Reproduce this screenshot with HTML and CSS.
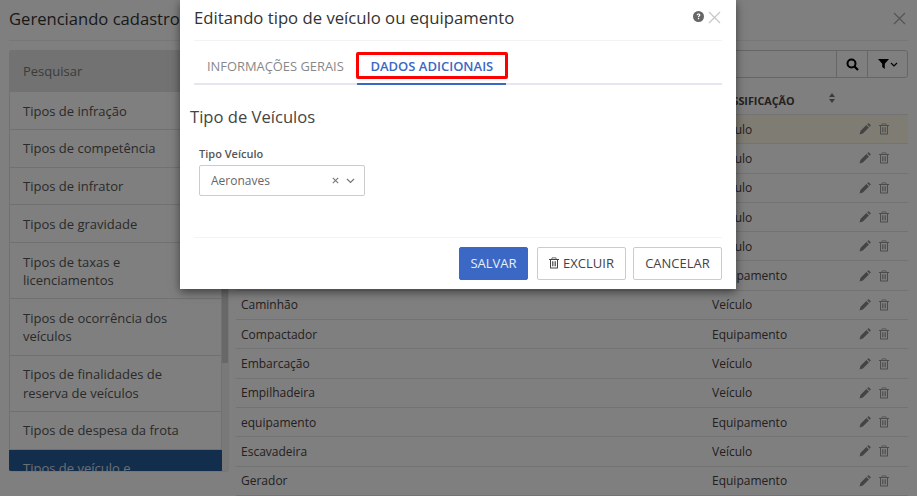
FILE: index.html
```html
<!DOCTYPE html>
<html lang="en">
<head>
    <meta charset="UTF-8">
    <meta name="viewport" content="width=device-width, initial-scale=1.0">
    <title>Gerenciando cadastros</title>
    <link rel="stylesheet" href="styles.css">
</head>
<body>
    <svg class="sprite" width="0" height="0">
        <symbol id="i-pencil" viewBox="0 0 12 12"><path d="M0.6 11.4l.8-3.3 6-6 2.5 2.5-6 6zM8.2 1.3l.8-.8c.3-.3.7-.3 1 0l1.5 1.5c.3.3.3.7 0 1l-.8.8z"/></symbol>
        <symbol id="i-trash" viewBox="0 0 12 12"><path fill-rule="evenodd" d="M4 0.5h4l.7 1.5h2.3v1h-1v7.7c0 .5-.4.9-.9.9H2.900c-.5 0-.9-.4-.9-.9V3H1V2h2.300zM4.500 1.300L4.200 2h3.600l-.3-.7zM3 3v7.400h6V3zM4.200 4.200h.8v5h-.8zM5.600 4.200h.8v5h-.8zM7 4.200h.8v5H7z"/></symbol>
    </svg>

    <div class="page">
        <header class="page-head">
            <h1>Gerenciando cadastros</h1>
            <svg class="x-icon" width="13" height="13" viewBox="0 0 13 13"><path d="M1 1l11 11M12 1L1 12"/></svg>
        </header>

        <div class="page-body">
            <div class="side-wrap">
                <nav class="side">
                    <div class="side-search">Pesquisar</div>
                    <div class="side-item">Tipos de infração</div>
                    <div class="side-item">Tipos de competência</div>
                    <div class="side-item">Tipos de infrator</div>
                    <div class="side-item">Tipos de gravidade</div>
                    <div class="side-item">Tipos de taxas e licenciamentos</div>
                    <div class="side-item">Tipos de ocorrência dos veículos</div>
                    <div class="side-item">Tipos de finalidades de reserva de veículos</div>
                    <div class="side-item">Tipos de despesa da frota</div>
                    <div class="side-item active">Tipos de veículo e equipamento</div>
                </nav>
                <div class="side-scroll"><div class="side-thumb"></div></div>
            </div>

            <main class="list">
                <div class="searchbar">
                    <div class="searchbar-input"></div>
                    <button class="searchbar-btn search-btn">
                        <svg width="13" height="13" viewBox="0 0 13 13"><circle cx="5.500" cy="5.500" r="4" fill="none" stroke="#000" stroke-width="2"/><path d="M8.500 8.500l3.500 3.500" stroke="#000" stroke-width="2.200"/></svg>
                    </button>
                    <button class="searchbar-btn filter-btn">
                        <svg width="11" height="10" viewBox="0 0 11 10"><path d="M0 0h11L6.800 4.800V10L4.200 8V4.800z" fill="#000"/></svg>
                        <svg width="8" height="5" viewBox="0 0 8 5"><path d="M1 1l3 3 3-3" fill="none" stroke="#000" stroke-width="1.200"/></svg>
                    </button>
                </div>

                <div class="row row-head">
                    <span class="col-name">NOME</span>
                    <span class="col-class">CLASSIFICAÇÃO</span>
                    <svg class="sort-icon" width="6" height="10" viewBox="0 0 6 10"><path d="M3 0l3 4H0zM3 10L0 6h6z"/></svg>
                </div>
                <div class="row highlight"><span class="col-name">Aeronaves</span><span class="col-class">Veículo</span><span class="row-actions"><svg><use href="#i-pencil"/></svg><svg><use href="#i-trash"/></svg></span></div>
                <div class="row"><span class="col-name">Ambulância</span><span class="col-class">Veículo</span><span class="row-actions"><svg><use href="#i-pencil"/></svg><svg><use href="#i-trash"/></svg></span></div>
                <div class="row"><span class="col-name">Automóvel</span><span class="col-class">Veículo</span><span class="row-actions"><svg><use href="#i-pencil"/></svg><svg><use href="#i-trash"/></svg></span></div>
                <div class="row"><span class="col-name">Carro</span><span class="col-class">Veículo</span><span class="row-actions"><svg><use href="#i-pencil"/></svg><svg><use href="#i-trash"/></svg></span></div>
                <div class="row"><span class="col-name">Moto</span><span class="col-class">Veículo</span><span class="row-actions"><svg><use href="#i-pencil"/></svg><svg><use href="#i-trash"/></svg></span></div>
                <div class="row"><span class="col-name">Betoneira</span><span class="col-class">Equipamento</span><span class="row-actions"><svg><use href="#i-pencil"/></svg><svg><use href="#i-trash"/></svg></span></div>
                <div class="row"><span class="col-name">Caminhão</span><span class="col-class">Veículo</span><span class="row-actions"><svg><use href="#i-pencil"/></svg><svg><use href="#i-trash"/></svg></span></div>
                <div class="row"><span class="col-name">Compactador</span><span class="col-class">Equipamento</span><span class="row-actions"><svg><use href="#i-pencil"/></svg><svg><use href="#i-trash"/></svg></span></div>
                <div class="row"><span class="col-name">Embarcação</span><span class="col-class">Veículo</span><span class="row-actions"><svg><use href="#i-pencil"/></svg><svg><use href="#i-trash"/></svg></span></div>
                <div class="row"><span class="col-name">Empilhadeira</span><span class="col-class">Veículo</span><span class="row-actions"><svg><use href="#i-pencil"/></svg><svg><use href="#i-trash"/></svg></span></div>
                <div class="row"><span class="col-name">equipamento</span><span class="col-class">Equipamento</span><span class="row-actions"><svg><use href="#i-pencil"/></svg><svg><use href="#i-trash"/></svg></span></div>
                <div class="row"><span class="col-name">Escavadeira</span><span class="col-class">Veículo</span><span class="row-actions"><svg><use href="#i-pencil"/></svg><svg><use href="#i-trash"/></svg></span></div>
                <div class="row"><span class="col-name">Gerador</span><span class="col-class">Equipamento</span><span class="row-actions"><svg><use href="#i-pencil"/></svg><svg><use href="#i-trash"/></svg></span></div>
            </main>
        </div>
    </div>

    <div class="overlay">
        <div class="modal">
            <div class="modal-head">
                <h2>Editando tipo de veículo ou equipamento</h2>
                <svg class="help-icon" width="11" height="11" viewBox="0 0 11 11"><circle cx="5.500" cy="5.500" r="5.500" fill="#666"/><path d="M3.700 4.200c0-1 .8-1.700 1.900-1.700 1 0 1.800.6 1.800 1.500 0 1.200-1.300 1.200-1.300 2.200H4.900c0-1.500 1.200-1.500 1.200-2.200 0-.3-.2-.5-.6-.5s-.6.2-.7.7zM4.900 7h1.200v1.200H4.900z" fill="#fff"/></svg>
                <svg class="x-icon light" width="13" height="13" viewBox="0 0 13 13"><path d="M1 1l11 11M12 1L1 12"/></svg>
            </div>

            <div class="tabs">
                <div class="tab">INFORMAÇÕES GERAIS</div>
                <div class="tab active">DADOS ADICIONAIS<span class="tab-mark"></span></div>
            </div>

            <div class="modal-body">
                <h3>Tipo de Veículos</h3>
                <label class="field-label">Tipo Veículo</label>
                <div class="select">
                    <span class="select-value">Aeronaves</span>
                    <svg width="7" height="7" viewBox="0 0 7 7"><path d="M.8.800l5.400 5.400M6.200.800L.8 6.200" stroke="#777" stroke-width="1.100"/></svg>
                    <svg width="9" height="6" viewBox="0 0 9 6"><path d="M1 1l3.500 3.500L8 1" fill="none" stroke="#777" stroke-width="1.200"/></svg>
                </div>
            </div>

            <div class="modal-foot">
                <button class="btn btn-primary">SALVAR</button>
                <button class="btn btn-del"><svg width="12" height="12"><use href="#i-trash"/></svg>EXCLUIR</button>
                <button class="btn btn-cancel">CANCELAR</button>
            </div>
        </div>
    </div>
</body>
</html>
```

FILE: styles.css
```css
* {
    box-sizing: border-box;
}
html, body {
    height: 100%;
}
body {
    margin: 0;
    overflow: hidden;
    background-color: white;
    font-family: "Open Sans", sans-serif;
    font-size: 13px;
    color: #4a4040;
}
.sprite {
    position: absolute;
}
.page {
    height: 496px;
    overflow: hidden;
    padding: 0 9px;
}
.page-head {
    height: 41px;
    padding-bottom: 4px;
    display: flex;
    align-items: center;
    justify-content: space-between;
    border-bottom: 1px solid #eee;
}
.page-head h1 {
    margin: 0;
    font-size: 16.600px;
    font-weight: 400;
    color: #333;
}
.x-icon {
    fill: none;
    stroke: #aaa;
    stroke-width: 1.300;
    margin-right: 2px;
}
.x-icon.light {
    stroke: #c8c8c8;
    margin: 0 1px 0 0;
}
.page-body {
    display: flex;
    padding-top: 9px;
}

/* left menu */
.side-wrap {
    width: 220px;
    height: 422px;
    display: flex;
    flex-shrink: 0;
    border: 1px solid #eee;
    border-top: 0;
    border-left: 0;
    border-radius: 0 0 3px 3px;
    overflow: hidden;
}
.side {
    width: 213px;
    overflow: hidden;
}
.side-search {
    height: 42px;
    padding-left: 14px;
    line-height: 42px;
    background-color: #e4e4e4;
    color: #777;
    border-radius: 3px 3px 0 0;
}
.side-item {
    padding: 9.500px 13px 8.700px;
    line-height: 18.570px;
    border: 1px solid #e2e2e2;
    border-top: 0;
    color: #555;
}
.side-item.active {
    background-color: #275c9b;
    color: #ddd;
    border-color: #275c9b;
}
.side-scroll {
    width: 6px;
    background-color: #f2f2f2;
}
.side-thumb {
    height: 313px;
    background-color: #d0d0d0;
}

/* list */
.list {
    flex: 1;
    margin-left: 7px;
    min-width: 0;
}
.searchbar {
    display: flex;
    height: 28px;
    border: 1px solid #ccc;
    border-radius: 3px;
}
.searchbar-input {
    flex: 1;
}
.searchbar-btn {
    border: 0;
    border-left: 1px solid #ccc;
    background: none;
    padding: 0;
    display: flex;
    align-items: center;
    justify-content: center;
    gap: 1px;
}
.search-btn {
    width: 31px;
}
.filter-btn {
    width: 40px;
}
.row {
    display: flex;
    align-items: center;
    height: 29.300px;
    padding-left: 5px;
    font-size: 12px;
    border-bottom: 1px solid #e6e6e6;
}
.row-head {
    height: 37px;
    padding-top: 8px;
    font-size: 10.800px;
    font-weight: 700;
    border-bottom: 1px solid #e6e6e6;
}
.row.highlight {
    background-color: #fff8e6;
}
.col-name {
    width: 471px;
    flex-shrink: 0;
}
.col-class {
    width: 119px;
}
.sort-icon {
    fill: #777;
    margin: -5px 0 0 -2px;
}
.row-actions {
    display: flex;
    gap: 7px;
    margin-left: 28px;
}
.row-actions svg {
    width: 12px;
    height: 12px;
    fill: #888;
}
.row-actions svg + svg {
    fill: #999;
}

/* modal */
.overlay {
    position: absolute;
    top: 0;
    left: 0;
    width: 100%;
    height: 100%;
    background-color: rgba(0, 0, 0, 0.5);
}
.modal {
    width: 556px;
    height: 289px;
    margin-left: 180px;
    padding: 0 14px;
    background-color: white;
    box-shadow: 0 3px 9px rgba(0, 0, 0, 0.5);
    display: flex;
    flex-direction: column;
}
.modal-head {
    height: 41px;
    padding-bottom: 5px;
    flex-shrink: 0;
    display: flex;
    align-items: center;
    border-bottom: 1px solid #f3f3f3;
}
.modal-head h2 {
    margin: 0;
    flex: 1;
    font-size: 16.700px;
    font-weight: 400;
    color: #333;
}
.help-icon {
    margin: -2px 4px 0 0;
}
.tabs {
    display: flex;
    height: 44px;
    flex-shrink: 0;
    padding-top: 11px;
    border-bottom: 2px solid #e6e6ee;
    font-size: 12.900px;
}
.tab {
    padding: 5px 13px 0;
    color: #888;
    height: 33px;
}
.tab.active {
    position: relative;
    margin-left: 0.700px;
    color: #3a68c4;
    font-size: 13px;
    font-weight: 600;
    border-bottom: 2px solid #3a68c4;
}
.tab-mark {
    position: absolute;
    left: -1px;
    top: 0;
    width: 152px;
    height: 27px;
    border: 3px solid #f00;
    border-radius: 2px;
}
.modal-body {
    flex: 1;
    padding: 0 0 0 5px;
}
.modal-body h3 {
    margin: 21px 0 0 -9px;
    font-size: 16.600px;
    line-height: 22px;
    font-weight: 400;
    color: #444;
}
.field-label {
    display: block;
    margin-top: 18px;
    font-size: 11px;
    line-height: 16px;
    font-weight: 600;
    color: #555;
}
.select {
    display: flex;
    align-items: center;
    width: 166px;
    height: 31px;
    margin-top: 3px;
    padding: 0 9px 0 11px;
    border: 1px solid #ccc;
    border-radius: 2px;
    font-size: 12px;
    color: #666;
    gap: 7px;
}
.select-value {
    flex: 1;
}
.modal-foot {
    height: 52px;
    flex-shrink: 0;
    display: flex;
    justify-content: flex-end;
    padding-top: 9px;
    gap: 7px;
    border-top: 1px solid #f3f3f3;
}
.btn {
    height: 33px;
    border: 1px solid #ccc;
    border-radius: 2px;
    background-color: white;
    color: #444;
    font-family: "Open Sans", sans-serif;
    font-size: 13px;
    padding: 0 0 2px;
    display: flex;
    align-items: center;
    justify-content: center;
}
.btn-primary {
    width: 69px;
    margin-right: 2px;
    background-color: #3a68c4;
    border-color: #3a68c4;
    color: #e8eefa;
}
.btn-del {
    width: 89px;
    gap: 3px;
    padding-right: 1px;
    fill: #444;
}
.btn-cancel {
    width: 89px;
}
```
